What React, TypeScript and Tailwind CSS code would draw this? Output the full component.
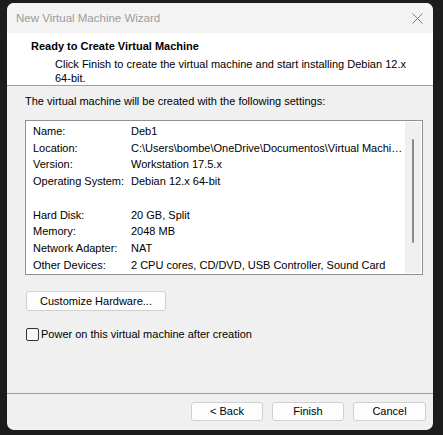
import React from "react";

const rows: [string, string][] = [
  ["Name:", "Deb1"],
  ["Location:", "C:\\Users\\bombe\\OneDrive\\Documentos\\Virtual Machi…"],
  ["Version:", "Workstation 17.5.x"],
  ["Operating System:", "Debian 12.x 64-bit"],
  ["", ""],
  ["Hard Disk:", "20 GB, Split"],
  ["Memory:", "2048 MB"],
  ["Network Adapter:", "NAT"],
  ["Other Devices:", "2 CPU cores, CD/DVD, USB Controller, Sound Card"],
];

const WinButton = ({ label, className }: { label: string; className?: string }) => (
  <button
    className={
      "h-[19px] rounded-[3px] border border-[#d0d0d0] bg-[#fdfdfd] text-[11px] leading-none text-black " +
      (className ?? "")
    }
  >
    {label}
  </button>
);

export default function App() {
  return (
    <div
      className="w-[443px] h-[435px] bg-[#1c1c1c] pt-[3px] pl-[7px] whitespace-nowrap"
      style={{ fontFamily: '"Liberation Sans", Arial, sans-serif' }}
    >
      <div className="w-[426px] h-[427px] rounded-[7px] overflow-hidden bg-[#f0f0f0] flex flex-col">
        {/* title bar */}
        <div className="h-[30px] bg-[#f3f3f3] flex items-center justify-between pl-[9px] pr-[10px]">
          <span className="text-[11.5px] text-[#9b9b9b] pt-[1px]">New Virtual Machine Wizard</span>
          <svg width="11" height="11" viewBox="0 0 11 11" className="mt-[1px]">
            <path d="M0.5 0.5 L10.5 10.5 M10.5 0.5 L0.5 10.5" stroke="#7a7a7a" strokeWidth="1" />
          </svg>
        </div>

        {/* header */}
        <div className="h-[53px] bg-white border-b border-[#a0a0a0] pl-[24px] pt-[6px]">
          <h1 className="text-[11px] font-bold leading-[15px] text-black">Ready to Create Virtual Machine</h1>
          <p className="pl-[24px] text-[11px] leading-[14px] text-black mt-[3px]">
            Click Finish to create the virtual machine and start installing Debian 12.x
            <br />
            64-bit.
          </p>
        </div>

        {/* body */}
        <div className="flex-1 flex flex-col pl-[18px] pr-[10px]">
          <p className="text-[11px] leading-[16px] text-black pt-[7px]">
            The virtual machine will be created with the following settings:
          </p>

          <div className="mt-[11px] w-[398px] h-[155px] border border-[#8f8f96] bg-white flex">
            <div className="flex-1 pl-[7px] pt-[2px] min-w-0">
              {rows.map(([label, value], i) => (
                <div key={i} className="flex h-[16.7px] items-center text-[11px] text-black">
                  <span className="w-[98px] shrink-0">{label}</span>
                  <span className="w-[266px]">{value}</span>
                </div>
              ))}
            </div>
            <div className="w-[16px] mr-[1px] my-[1px] bg-[#f0f0f0] flex justify-center pt-[17px]">
              <div className="w-[2px] h-[104px] bg-[#8a8a8a] rounded-full" />
            </div>
          </div>

          <button className="mt-[16px] ml-[1px] w-[140px] h-[20px] rounded-[3px] border border-[#d0d0d0] bg-[#fdfdfd] text-[11px] text-black">
            Customize Hardware...
          </button>

          <label className="mt-[15px] ml-[1px] flex items-center gap-[2px] text-[11px] text-black">
            <span className="w-[13px] h-[13px] rounded-[2px] border border-[#333] bg-[#f8f8f8] inline-block" />
            Power on this virtual machine after creation
          </label>
        </div>

        {/* footer */}
        <div className="border-t border-[#a0a0a0] pt-[8px] pb-[9px] pr-[7px] flex justify-end gap-[9px]">
          <WinButton label="< Back" className="w-[72px]" />
          <WinButton label="Finish" className="w-[72px]" />
          <WinButton label="Cancel" className="w-[73px]" />
        </div>
      </div>
    </div>
  );
}
